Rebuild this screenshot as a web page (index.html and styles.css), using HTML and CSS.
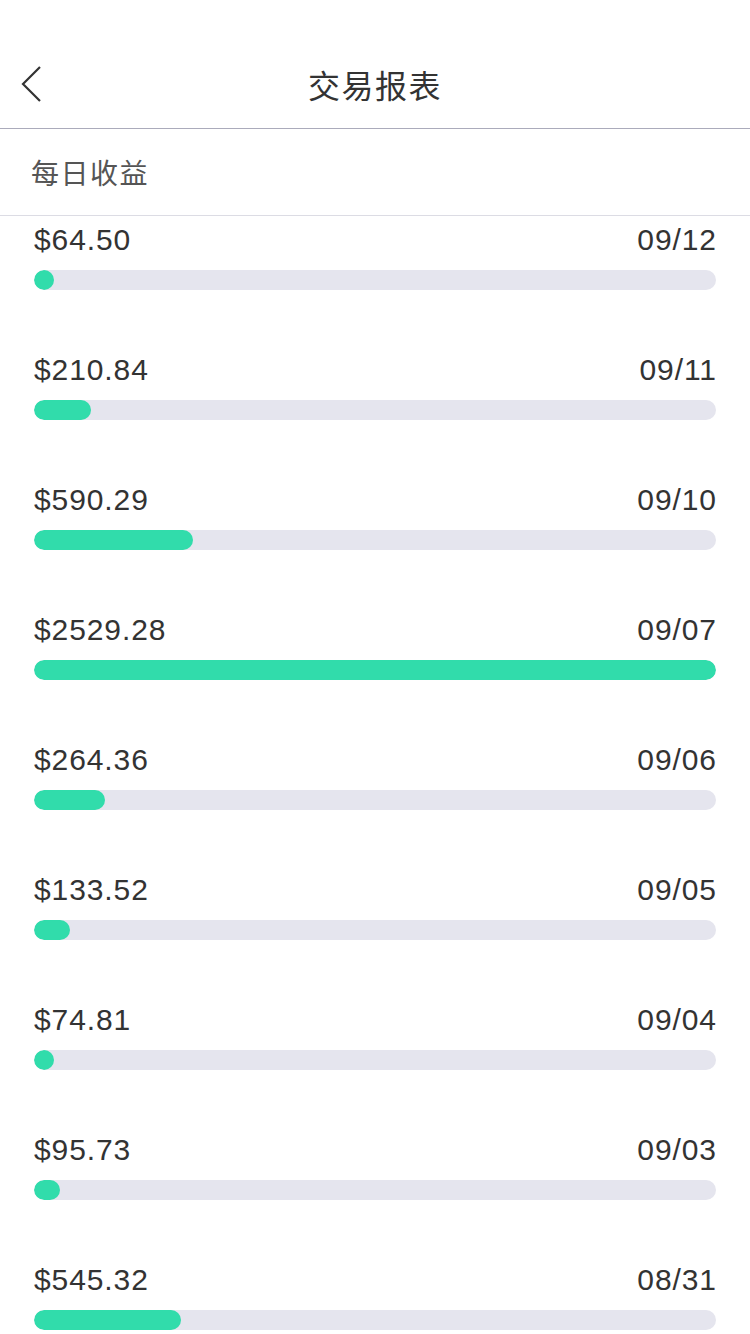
FILE: index.html
```html
<!DOCTYPE html>
<html lang="zh">
<head>
<meta charset="utf-8">
<title>交易报表</title>
<link rel="stylesheet" href="styles.css">
</head>
<body>
<div class="page">
  <header class="nav">
    <div class="back">
      <svg width="24" height="40" viewBox="0 0 24 40"><polyline points="20,3 3,20 20,37" fill="none" stroke="#333" stroke-width="2.2" stroke-linejoin="miter"/></svg>
    </div>
    <h1 class="title">交易报表</h1>
  </header>
  <div class="section">每日收益</div>
  <ul class="list">
    <li class="row"><div class="line"><span class="amount">$64.50</span><span class="date">09/12</span></div><div class="track"><div class="fill" style="width:20px"></div></div></li>
    <li class="row"><div class="line"><span class="amount">$210.84</span><span class="date">09/11</span></div><div class="track"><div class="fill" style="width:57px"></div></div></li>
    <li class="row"><div class="line"><span class="amount">$590.29</span><span class="date">09/10</span></div><div class="track"><div class="fill" style="width:159px"></div></div></li>
    <li class="row"><div class="line"><span class="amount">$2529.28</span><span class="date">09/07</span></div><div class="track"><div class="fill" style="width:100%"></div></div></li>
    <li class="row"><div class="line"><span class="amount">$264.36</span><span class="date">09/06</span></div><div class="track"><div class="fill" style="width:71px"></div></div></li>
    <li class="row"><div class="line"><span class="amount">$133.52</span><span class="date">09/05</span></div><div class="track"><div class="fill" style="width:36px"></div></div></li>
    <li class="row"><div class="line"><span class="amount">$74.81</span><span class="date">09/04</span></div><div class="track"><div class="fill" style="width:20px"></div></div></li>
    <li class="row"><div class="line"><span class="amount">$95.73</span><span class="date">09/03</span></div><div class="track"><div class="fill" style="width:26px"></div></div></li>
    <li class="row"><div class="line"><span class="amount">$545.32</span><span class="date">08/31</span></div><div class="track"><div class="fill" style="width:147px"></div></div></li>
  </ul>
</div>
</body>
</html>
```

FILE: styles.css
```css
* { box-sizing: border-box; }
html, body {
  margin: 0;
  padding: 0;
  background: #fff;
}
body {
  font-family: "Liberation Sans", "Noto Sans CJK SC", sans-serif;
  color: #333;
}
.page {
  width: 750px;
  height: 1334px;
  overflow: hidden;
  padding-top: 40px;
}
.nav {
  position: relative;
  height: 89px;
  border-bottom: 1px solid #ababbb;
  display: flex;
  align-items: center;
  justify-content: center;
}
.back {
  position: absolute;
  left: 20px;
  top: 24px;
  width: 24px;
  height: 40px;
}
.back svg { display: block; }
.title {
  margin: 0;
  font-family: "Noto Sans CJK SC", sans-serif;
  font-weight: 400;
  font-size: 32px;
  letter-spacing: 1.5px;
  color: #333;
  line-height: 40px;
}
.section {
  height: 87px;
  border-bottom: 1px solid #dcdce4;
  padding-left: 31px;
  display: flex;
  align-items: center;
  font-family: "Noto Sans CJK SC", sans-serif;
  font-size: 28px;
  letter-spacing: 1.5px;
  color: #555;
}
.list {
  list-style: none;
  margin: 0;
  padding: 4px 34px 0 34px;
}
.row {
  height: 130px;
  display: flex;
  flex-direction: column;
  gap: 10px;
}
.line {
  height: 40px;
  display: flex;
  align-items: center;
  justify-content: space-between;
  font-size: 30px;
  letter-spacing: 0.9px;
  color: #333;
}
.date { margin-right: -0.9px; }
.track {
  height: 20px;
  border-radius: 10px;
  background: #e5e5ee;
  overflow: hidden;
}
.fill {
  height: 100%;
  border-radius: 10px;
  background: #31dcab;
}
```
